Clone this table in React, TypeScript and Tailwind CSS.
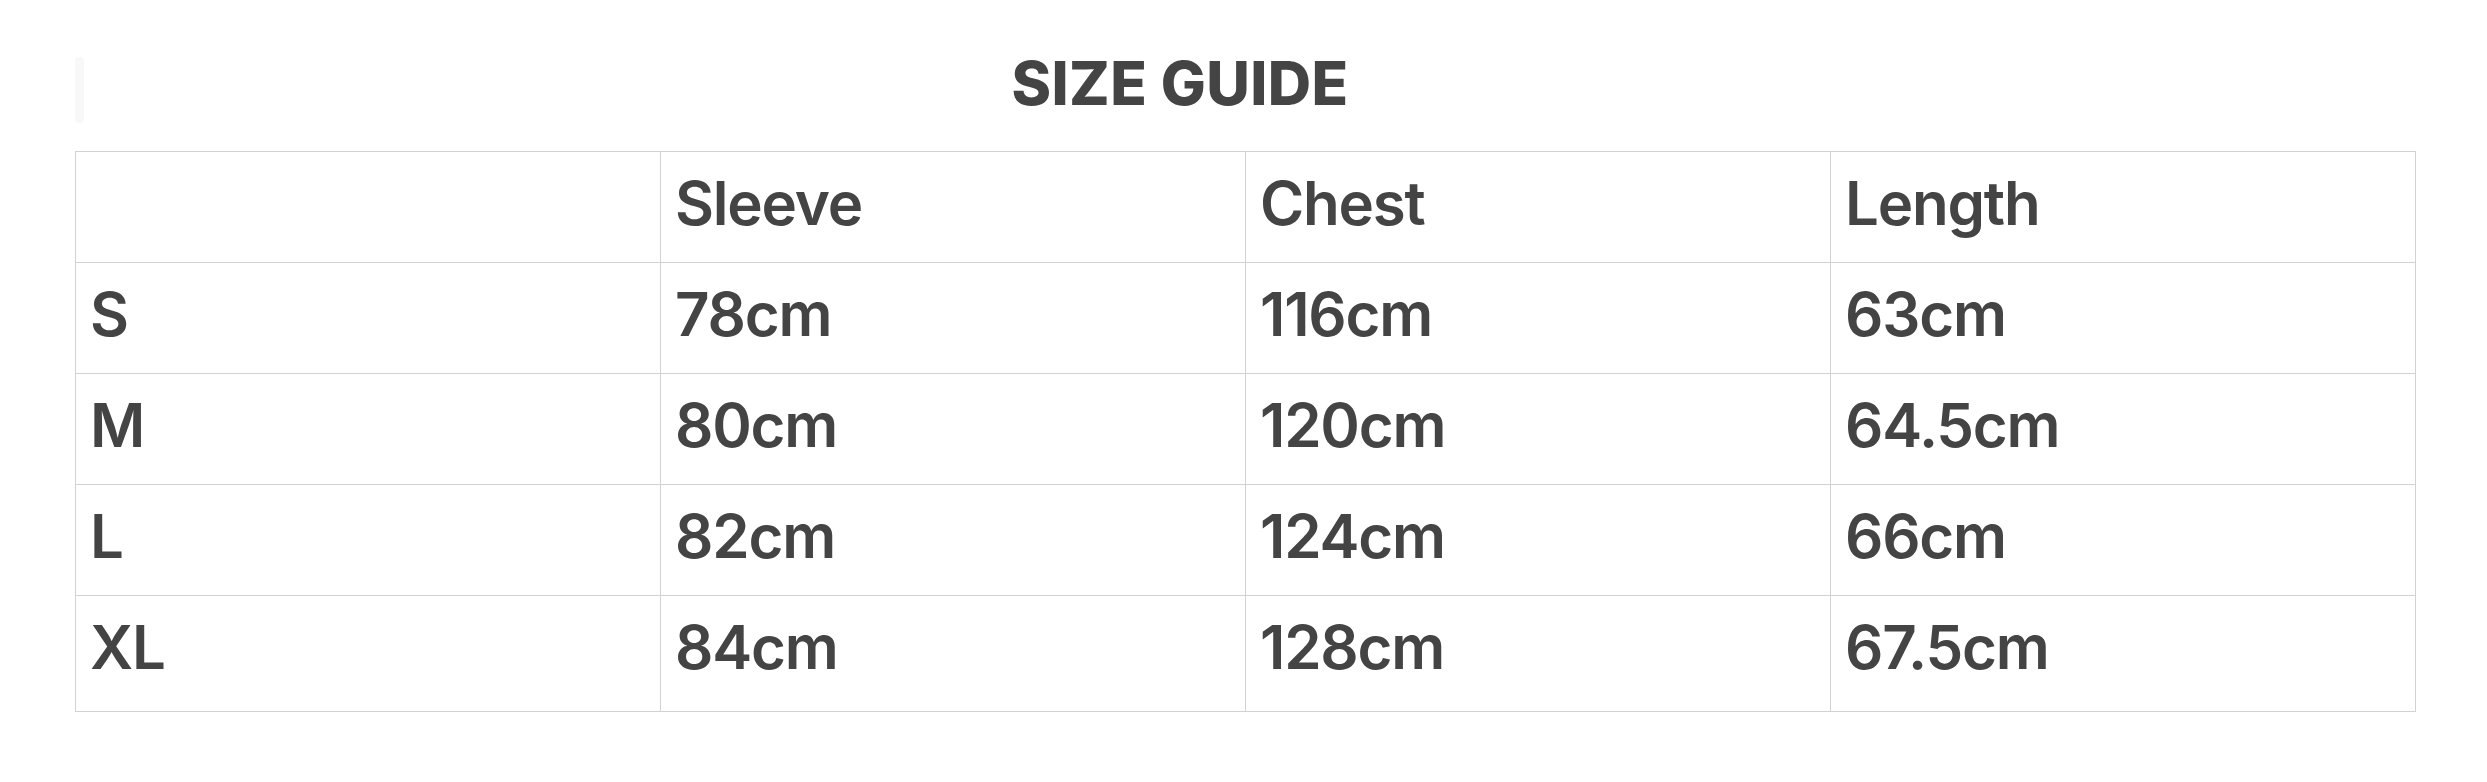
const header = ["", "Sleeve", "Chest", "Length"];

const rows = [
  ["S", "78cm", "116cm", "63cm"],
  ["M", "80cm", "120cm", "64.5cm"],
  ["L", "82cm", "124cm", "66cm"],
  ["XL", "84cm", "128cm", "67.5cm"],
];

function Cell({ children, last }: { children?: React.ReactNode; last?: boolean }) {
  return (
    <div
      className={
        last
          ? "h-[116px] border-r border-b border-[#d2d2d2] pl-[14px] pt-[21px] text-[60px] leading-none font-semibold tracking-[-1.2px]"
          : "h-[111px] border-r border-b border-[#d2d2d2] pl-[14px] pt-[21px] text-[60px] leading-none font-semibold tracking-[-1.2px]"
      }
    >
      {children}
    </div>
  );
}

export default function App() {
  return (
    <div
      className="w-[2487px] h-[782px] bg-white text-[#444444] px-[75px] pt-[53px]"
      style={{ fontFamily: "Inter, 'Noto Sans', sans-serif" }}
    >
      {/* Title */}
      <div className="flex items-start h-[98px]">
        <div className="w-[9px] h-[66px] mt-[4px] bg-[#f8f8f8] rounded-sm" />
        <h1 className="flex-1 text-center pr-[136px] text-[60px] leading-none font-extrabold tracking-[0.4px]">
          SIZE GUIDE
        </h1>
      </div>

      {/* Table */}
      <div className="grid grid-cols-4 w-[2341px] border-l border-t border-[#d2d2d2]">
        {header.map((h, i) => (
          <Cell key={"h" + i}>{h}</Cell>
        ))}
        {rows.map((r, ri) =>
          r.map((v, ci) => (
            <Cell key={ri + "-" + ci} last={ri === rows.length - 1}>
              {v}
            </Cell>
          ))
        )}
      </div>
    </div>
  );
}
